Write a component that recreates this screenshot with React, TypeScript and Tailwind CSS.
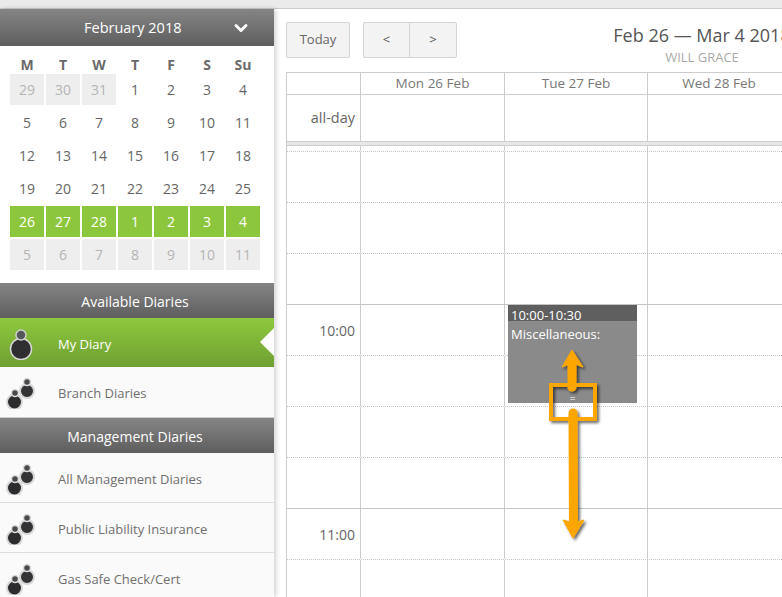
import React from "react";
import { ChevronDown } from "lucide-react";

const weeks = [
  [29, 30, 31, 1, 2, 3, 4],
  [5, 6, 7, 8, 9, 10, 11],
  [12, 13, 14, 15, 16, 17, 18],
  [19, 20, 21, 22, 23, 24, 25],
  [26, 27, 28, 1, 2, 3, 4],
  [5, 6, 7, 8, 9, 10, 11],
];
const dayNames = ["M", "T", "W", "T", "F", "S", "Su"];

// bottom border of each slot row in the time grid
const slots = [
  { h: "h-[6px]", border: "border-dotted", label: "" },
  { h: "h-[51px]", border: "border-dotted", label: "" },
  { h: "h-[51px]", border: "border-dotted", label: "" },
  { h: "h-[51px]", border: "border-solid", label: "" },
  { h: "h-[51px]", border: "border-dotted", label: "10:00", event: true },
  { h: "h-[51px]", border: "border-dotted", label: "" },
  { h: "h-[51px]", border: "border-dotted", label: "" },
  { h: "h-[51px]", border: "border-solid", label: "" },
  { h: "h-[51px]", border: "border-dotted", label: "11:00" },
  { h: "h-[51px]", border: "border-dotted", label: "" },
];

function OnePerson() {
  return (
    <svg width="30" height="34" viewBox="0 0 30 34" className="shrink-0">
      <circle cx="15" cy="23" r="10.5" fill="#2f2f31" stroke="#d8d8d8" strokeWidth="1.5" />
      <circle cx="15" cy="9" r="5" fill="#55585a" stroke="#d0d0d0" strokeWidth="1.5" />
    </svg>
  );
}

function TwoPeople() {
  return (
    <svg width="32" height="34" viewBox="0 0 32 34" className="shrink-0">
      <circle cx="21" cy="16" r="7" fill="#333335" stroke="#d6d6d6" strokeWidth="2" />
      <circle cx="21" cy="7" r="3.5" fill="#4a4a4c" stroke="#dcdcdc" strokeWidth="1.5" />
      <circle cx="8.5" cy="27" r="7.5" fill="#2c2c2e" stroke="#d6d6d6" strokeWidth="2" />
      <circle cx="9" cy="18" r="3.5" fill="#4a4a4c" stroke="#dcdcdc" strokeWidth="1.5" />
    </svg>
  );
}

function SectionHeader({ title }: { title: string }) {
  return (
    <div className="flex h-[35px] items-center justify-center bg-gradient-to-b from-[#858585] to-[#5e5e5e] pr-[4px] pt-[2px] text-[14px] text-white">
      {title}
    </div>
  );
}

function DiaryRow({ name, last }: { name: string; last?: boolean }) {
  return (
    <div
      className={`flex items-center border-b bg-[#fafafa] pl-[6px] text-[13px] text-[#6f6f6f] ${
        last ? "h-[51px] border-[#cccccc]" : "h-[50px] border-[#dddddd]"
      }`}
    >
      <TwoPeople />
      <span className="ml-[20px] mt-[4px]">{name}</span>
    </div>
  );
}

function Sidebar() {
  return (
    <div className="w-[274px] shrink-0 overflow-hidden bg-white shadow-[2px_0_5px_rgba(0,0,0,0.18)]">
      <div className="flex h-[37px] items-center bg-gradient-to-b from-[#858585] to-[#5e5e5e] text-white">
        <span className="ml-[84px] w-[101px] whitespace-nowrap text-[14.5px]">February 2018</span>
        <ChevronDown className="ml-[46px] h-[20px] w-[20px]" strokeWidth={3.5} />
      </div>
      <div className="px-[10px] pb-[11px] pt-[14px]">
        <div className="grid h-[14px] grid-cols-[repeat(7,34px)] gap-x-[2px] text-center text-[14px] font-bold leading-[10px] text-[#6a6a6a]">
          {dayNames.map((d, i) => (
            <div key={i}>{d}</div>
          ))}
        </div>
        <div className="grid grid-cols-[repeat(7,34px)] gap-x-[2px] text-[14px] text-[#666666]">
          {weeks.map((week, w) =>
            week.map((day, d) => {
              const muted = (w === 0 && d < 3) || w === 5;
              const active = w === 4;
              let cls = "h-[33px] pb-[2px]";
              if (muted) cls = "h-[31px] mb-[2px] bg-[#eeeeee] text-[#b5b5b5]";
              if (active) cls = "h-[31px] mb-[2px] bg-[#8cc63c] text-white";
              return (
                <div key={`${w}-${d}`} className={`flex items-center justify-center ${cls}`}>
                  {day}
                </div>
              );
            })
          )}
        </div>
      </div>
      <SectionHeader title="Available Diaries" />
      <div className="relative flex h-[49px] items-center bg-gradient-to-b from-[#8fc93d] to-[#6f9f33] pl-[6px] text-[13px] text-white">
        <OnePerson />
        <span className="ml-[22px] mt-[4px]">My Diary</span>
        <div className="absolute right-0 top-[10px] h-0 w-0 border-y-[14px] border-r-[14px] border-y-transparent border-r-white" />
      </div>
      <DiaryRow name="Branch Diaries" last />
      <SectionHeader title="Management Diaries" />
      <DiaryRow name="All Management Diaries" />
      <DiaryRow name="Public Liability Insurance" />
      <DiaryRow name="Gas Safe Check/Cert" />
    </div>
  );
}

function Toolbar() {
  return (
    <div className="flex h-[63px] items-start pl-[12px] pt-[13px]">
      <button className="h-[36px] w-[64px] shrink-0 rounded-[2px] border border-[#d5d5d5] bg-[#f3f3f3] text-[13px] text-[#666666]">
        Today
      </button>
      <div className="ml-[13px] flex h-[36px] w-[94px] shrink-0 rounded-[2px] border border-[#d5d5d5] bg-[#f3f3f3] text-[13px] text-[#555555]">
        <div className="flex w-[46px] items-center justify-center border-r border-[#d5d5d5]">&lt;</div>
        <div className="flex flex-1 items-center justify-center">&gt;</div>
      </div>
      <div className="ml-[156px] flex w-[178px] shrink-0 flex-col items-center whitespace-nowrap">
        <div className="text-[18px] leading-[26px] text-[#555555]">Feb 26 — Mar 4 2018</div>
        <div className="text-[13px] leading-[18px] text-[#aaaaaa]">WILL GRACE</div>
      </div>
    </div>
  );
}

function EventBlock() {
  return (
    <div className="absolute left-[3px] top-0 z-10 h-[98px] w-[129px] bg-[#8a8a8a] text-[13px] text-white">
      <div className="h-[16px] bg-[#5f5f5f] pl-[3px] leading-[20px]">10:00-10:30</div>
      <div className="pl-[3px] pt-[3px] leading-[20px]">Miscellaneous:</div>
      <div className="absolute bottom-[-1px] left-0 right-0 text-center text-[10px] leading-[12px]">=</div>
    </div>
  );
}

function Annotation() {
  return (
    <svg className="absolute left-[530px] top-[345px] z-20 overflow-visible" width="80" height="200" viewBox="0 0 80 200" fill="none">
      <defs>
        <filter id="sh" x="-30%" y="-10%" width="170%" height="120%">
          <feDropShadow dx="2" dy="2" stdDeviation="1.5" floodColor="#000" floodOpacity="0.6" />
        </filter>
      </defs>
      <g filter="url(#sh)">
        <rect x="21" y="40" width="44" height="34" stroke="#fda600" strokeWidth="4" />
        <path d="M42 42 L42 20" stroke="#fda600" strokeWidth="9" strokeLinecap="round" />
        <path d="M42 5 L53 22 L42.5 18 L32 22 Z" fill="#fda600" stroke="#fda600" strokeWidth="1" strokeLinejoin="round" />
        <path d="M43 68 L43.5 178" stroke="#fda600" strokeWidth="9" strokeLinecap="round" />
        <path d="M43 193 L33 175 L43.5 178 L54 175 Z" fill="#fda600" stroke="#fda600" strokeWidth="1" strokeLinejoin="round" />
      </g>
    </svg>
  );
}

function Calendar() {
  const dayCell = "shrink-0 border-r border-[#cccccc]";
  const widths = ["w-[144px]", "w-[143px]", "w-[143px]"];
  return (
    <div className="ml-[12px] w-[640px] border-l border-t border-[#cccccc] text-[#777777]">
      <div className="flex h-[22px] border-b border-[#cccccc] text-[13.5px]">
        <div className="w-[74px] shrink-0 border-r border-[#cccccc]" />
        {["Mon 26 Feb", "Tue 27 Feb", "Wed 28 Feb"].map((d, i) => (
          <div key={d} className={`${dayCell} ${widths[i]} text-center leading-[21px]`}>
            {d}
          </div>
        ))}
      </div>
      <div className="flex h-[47px] border-b border-[#cccccc]">
        <div className="flex w-[74px] shrink-0 items-center justify-end border-r border-[#cccccc] pr-[5px] text-[14.5px] text-[#666666]">
          all-day
        </div>
        <div className={`${dayCell} ${widths[0]}`} />
        <div className={`${dayCell} ${widths[1]}`} />
        <div className={`${dayCell} ${widths[2]}`} />
      </div>
      <div className="h-[4px] border-b border-[#cccccc] bg-[#e8e8e8]" />
      {slots.map((s, i) => (
        <div key={i} className={`flex ${s.h} border-b border-[#c4c4c4] ${s.border}`}>
          <div className="flex w-[74px] shrink-0 items-center justify-end border-r border-[#cccccc] pr-[5px] text-[14px] text-[#666666]">
            {s.label}
          </div>
          <div className={`${dayCell} ${widths[0]}`} />
          <div className={`${dayCell} ${widths[1]} relative`}>{s.event && <EventBlock />}</div>
          <div className={`${dayCell} ${widths[2]}`} />
        </div>
      ))}
    </div>
  );
}

export default function App() {
  return (
    <div className="relative h-[597px] w-[782px] overflow-hidden bg-white font-['Open_Sans',sans-serif]">
      <div className="h-[9px] border-b border-[#cccccc] bg-[#ebebeb]" />
      <div className="flex h-[588px]">
        <Sidebar />
        <div className="min-w-0 flex-1 overflow-hidden">
          <Toolbar />
          <Calendar />
        </div>
      </div>
      <Annotation />
    </div>
  );
}
